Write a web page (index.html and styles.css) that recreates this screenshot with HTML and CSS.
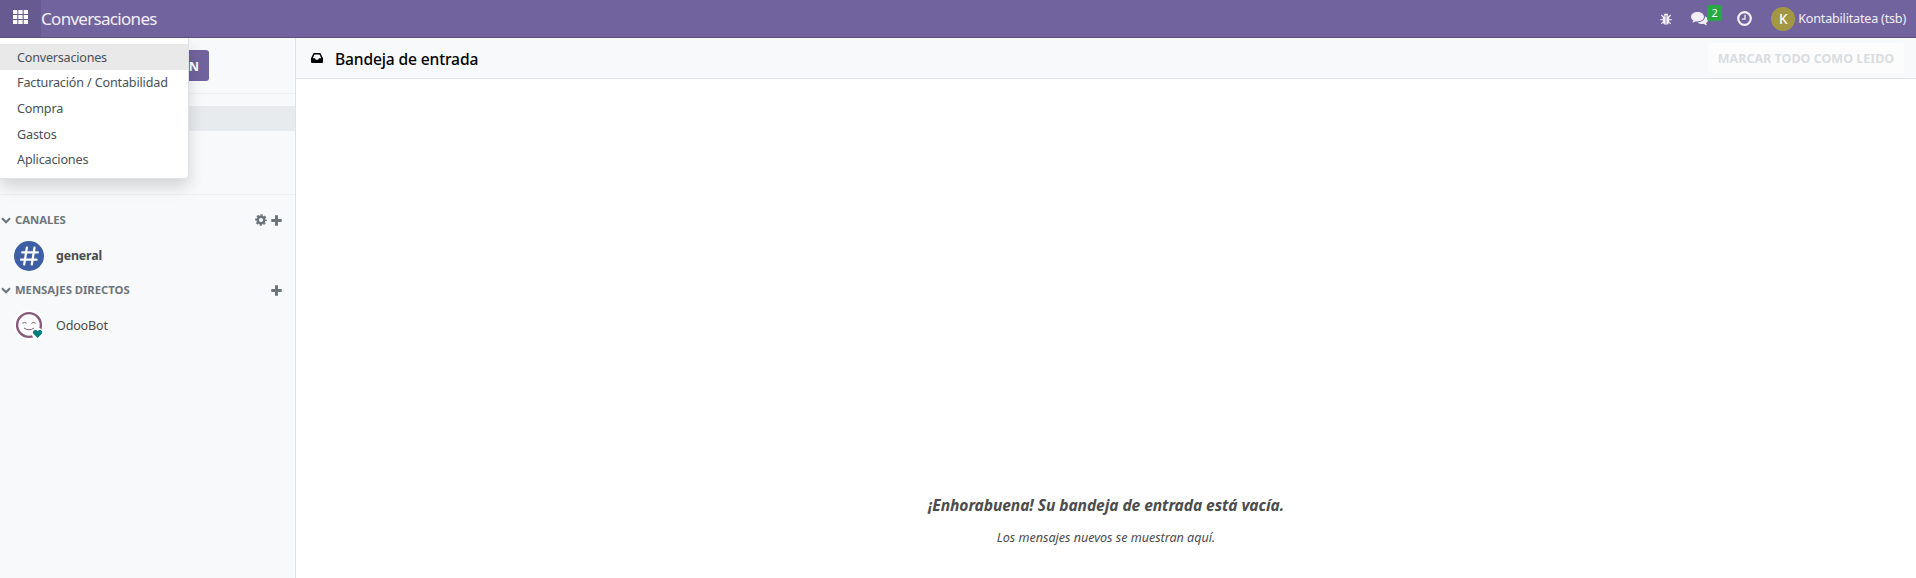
FILE: index.html
```html
<!DOCTYPE html>
<html lang="es">
<head>
<meta charset="utf-8">
<title>Conversaciones</title>
<link rel="stylesheet" href="styles.css">
</head>
<body>
<header class="navbar">
  <div class="apps">
    <button class="apps-toggle" aria-label="Aplicaciones">
      <svg width="15" height="14" viewBox="0 0 15 14" fill="#fff"><path d="M0 0h4.300v4H0zM5.300 0h4.300v4H5.300zM10.700 0H15v4h-4.300zM0 5h4.300v4H0zM5.300 5h4.300v4H5.300zM10.700 5H15v4h-4.300zM0 10h4.300v4H0zM5.300 10h4.300v4H5.300zM10.700 10H15v4h-4.300z"/></svg>
    </button>
    <nav class="menu">
      <a class="item active"><span>Conversaciones</span></a>
      <a class="item"><span>Facturación / Contabilidad</span></a>
      <a class="item"><span>Compra</span></a>
      <a class="item"><span>Gastos</span></a>
      <a class="item"><span>Aplicaciones</span></a>
    </nav>
  </div>
  <span class="brand">Conversaciones</span>
  <div class="systray">
    <svg class="bug" width="12" height="12" viewBox="0 0 12 12" fill="#f1eff5"><path d="M3.700 2.700a2.300 2.300 0 0 1 4.600 0z"/><path d="M2.800 3.300h2.900v8.400C4 11.600 2.800 10.300 2.800 8zM6.300 3.300h2.900V8c0 2.300-1.200 3.600-2.900 3.700z"/><path d="M1.300 2l2 2M10.700 2l-2 2M.2 6.700h3M11.800 6.700h-3M1.300 11l2-2.200M10.700 11l-2-2.200" stroke="#f1eff5" stroke-width="1.100"/></svg>
    <div class="chat">
      <svg width="17" height="14" viewBox="0 0 17 14" fill="#f1eff5"><path d="M6.500 0C2.900 0 0 2.100 0 4.800c0 1.500.9 2.800 2.400 3.700-.2.900-.7 1.400-1.200 2 1.500-.1 2.600-.7 3.400-1.300.6.100 1.200.2 1.900.2 3.600 0 6.500-2.100 6.500-4.700S10.100 0 6.500 0z"/><path d="M14 4.200c.2 3.400-2.900 6-7.400 6.200 1.300 1.300 3.700 1.800 5.900 1.300 1 .8 2.100 1.300 3.700 1.500-.6-.6-1-1.200-1.200-2 2.500-1.600 2.700-5-1-7z"/></svg>
      <span class="badge">2</span>
    </div>
    <svg class="clock" width="15" height="15" viewBox="0 0 15 15" fill="none" stroke="#f1eff5"><circle cx="7.500" cy="7.500" r="6.300" stroke-width="2.200"/><path d="M8 3.800v4.400H4.800" stroke-width="1.300"/></svg>
    <span class="avatar">K</span>
    <span class="user">Kontabilitatea (tsb)</span>
  </div>
</header>
<div class="content">
  <aside class="sidebar">
    <div class="top"><button class="meeting">N</button></div>
    <div class="boxes"><div class="box selected"></div></div>
    <div class="category">
      <svg width="10" height="7" viewBox="0 0 10 7" fill="none" stroke="#6c757d" stroke-width="2.100"><path d="M1 1.200l4 4 4-4"/></svg>
      <span>CANALES</span>
      <span class="actions">
        <svg width="12" height="12" viewBox="0 0 12 12" fill="none" stroke="#6c757d"><circle cx="6" cy="6" r="3.300" stroke-width="2.500"/><circle cx="6" cy="6" r="4.900" stroke-width="1.800" stroke-dasharray="2.200 1.648" stroke-dashoffset="1.100"/></svg>
        <svg width="11" height="11" viewBox="0 0 11 11" fill="#6c757d"><path d="M4 .3h3V4h3.700v3H7v3.700H4V7H.3V4H4z"/></svg>
      </span>
    </div>
    <div class="thread">
      <svg width="30" height="30" viewBox="0 0 30 30"><circle cx="15" cy="15" r="15" fill="#3e5fa6"/><path d="M12.900 6.500l-2.700 17M20.500 6.500l-2.700 17M8.200 11.400h15.600M7 18.700h15.600" stroke="#fff" stroke-width="2.200" stroke-linecap="round"/></svg>
      <span class="unread">general</span>
    </div>
    <div class="category second">
      <svg width="10" height="7" viewBox="0 0 10 7" fill="none" stroke="#6c757d" stroke-width="2.100"><path d="M1 1.200l4 4 4-4"/></svg>
      <span>MENSAJES DIRECTOS</span>
      <span class="actions">
        <svg width="11" height="11" viewBox="0 0 11 11" fill="#6c757d"><path d="M4 .3h3V4h3.700v3H7v3.700H4V7H.3V4H4z"/></svg>
      </span>
    </div>
    <div class="thread">
      <svg width="30" height="30" viewBox="0 0 30 30"><circle cx="15" cy="15" r="15" fill="#fff"/><circle cx="15" cy="15" r="11.900" fill="none" stroke="#875a7b" stroke-width="2.400"/><path d="M8.400 13.300q2.100-1.900 4.200 0M17.400 13.300q2.100-1.900 4.200 0M10 18q5 3.600 10 0" fill="none" stroke="#875a7b" stroke-width="1"/><circle cx="23.700" cy="23.700" r="5.900" fill="#fff"/><path d="M23.600 28l-4-4c-2.200-2.900 1.800-5.500 4-2.900 2.200-2.600 6.200 0 4 2.900z" fill="#017e7e"/></svg>
      <span class="name">OdooBot</span>
    </div>
  </aside>
  <main class="main">
    <div class="heading">
      <svg width="12" height="10" viewBox="0 0 12 10"><path fill-rule="evenodd" d="M2.600 0h6.800L12 5.300V9q0 1-1 1H1Q0 10 0 9V5.300zM3.500 1.500L1.800 5.300h2.300l.7 1.500h2.400l.7-1.500h2.300L8.500 1.500z"/></svg>
      <h1 class="title">Bandeja de entrada</h1>
      <button class="mark">MARCAR TODO COMO LEIDO</button>
    </div>
    <div class="empty">
      <p class="congrats">¡Enhorabuena! Su bandeja de entrada está vacía.</p>
      <p class="hint">Los mensajes nuevos se muestran aquí.</p>
    </div>
  </main>
</div>
</body>
</html>
```
FILE: styles.css
```css
* { box-sizing: border-box; }
body { margin: 0; height: 578px; display: flex; flex-direction: column; overflow: hidden; background: #fff; color: #4c4c4c; font: 12.600px/20px "Noto Sans", "Open Sans", sans-serif; }
button { border: 0; padding: 0; font: inherit; }
svg { display: block; flex: none; }
span { white-space: nowrap; }
.navbar { height: 38px; flex: none; display: flex; align-items: center; background: #71639e; border-bottom: 1px solid #5a4f7f; color: #f1eff5; }
.apps { position: relative; width: 41px; height: 37px; }
.apps-toggle { width: 41px; height: 37px; padding: 0 0 3px 13px; display: flex; align-items: center; background: #675a91; }
.menu { position: absolute; z-index: 2; top: 38px; left: 0; width: 189px; height: 141px; padding-top: 6px; background: #fff; border: 1px solid #dee2e6; border-width: 0 1px 1px 0; border-radius: 0 0 4px 0; box-shadow: 0 8px 16px rgba(0,0,0,.15); clip-path: inset(0 -30px -30px 0); }
.item { display: flex; align-items: center; height: 25.600px; padding: 2px 0 0 17px; color: #495057; letter-spacing: -.16px; }
.item.active { background: #e9e9e9; letter-spacing: -.22px; }
.brand { font-size: 17px; letter-spacing: -.7px; }
.systray { margin-left: auto; padding-right: 10px; display: flex; align-items: center; }
.bug { margin-right: 19px; }
.chat { position: relative; margin-right: 29px; }
.badge { position: absolute; left: 16px; top: -7px; width: 15px; height: 16px; border-radius: 3px; background: #28a745; color: #fff; font-size: 11px; line-height: 16px; text-align: center; }
.clock { margin-right: 19px; }
.avatar { width: 24px; height: 24px; margin-right: 3px; border-radius: 50%; background: #a39744; color: #fff; font-size: 13.500px; font-weight: 500; line-height: 24px; text-align: center; }
.user { letter-spacing: -.2px; }
.content { flex: 1; display: flex; min-height: 0; }
.sidebar { width: 296px; flex: none; background: #f8f9fb; border-right: 1px solid #dee2e6; }
.top { height: 56px; padding: 12px 0 0 87px; border-bottom: 1px solid #eff1f3; }
.meeting { width: 122px; height: 31px; padding: 2px 10px 0 0; display: flex; align-items: center; justify-content: flex-end; border-radius: 3px; background: #71639e; color: #fff; font-weight: 700; }
.boxes { height: 101px; padding-top: 12px; border-bottom: 1px solid #eff1f3; }
.box.selected { height: 25px; background: #e8ebee; }
.category { height: 20px; margin-top: 15px; padding: 0 13px 0 1px; display: flex; align-items: center; gap: 4px; color: #6c757d; font-size: 11.300px; font-weight: 700; letter-spacing: -.03px; }
.category.second { margin-top: 9px; }
.actions { margin-left: auto; display: flex; align-items: center; gap: 4px; }
.thread { height: 30px; margin-top: 11px; padding-left: 14px; display: flex; align-items: center; gap: 12px; }
.category.second + .thread { margin-top: 10px; }
.unread { font-size: 12.400px; font-weight: 700; letter-spacing: -.15px; }
.name { padding-top: 1px; letter-spacing: -.2px; }
.main { flex: 1; display: flex; flex-direction: column; }
.heading { height: 41px; flex: none; padding: 0 12px 0 15px; display: flex; align-items: center; background: #f8f9fb; border-bottom: 1px solid #dee2e6; }
.title { margin: 0 0 0 12px; padding-top: 2px; color: #000; font-size: 15.600px; font-weight: 500; letter-spacing: -.15px; }
.mark { width: 196px; height: 30px; margin-left: auto; padding-top: 2px; border-radius: 3px; background: #fcfcfd; color: #d9dce0; font-size: 12.500px; font-weight: 700; letter-spacing: 0; white-space: nowrap; }
.empty { flex: 1; display: flex; flex-direction: column; align-items: center; justify-content: flex-end; padding-bottom: 30px; font-style: italic; }
.congrats { margin: 0 0 13px; font-size: 15.600px; font-weight: 700; letter-spacing: -.08px; }
.hint { margin: 0; letter-spacing: -.03px; }
```
